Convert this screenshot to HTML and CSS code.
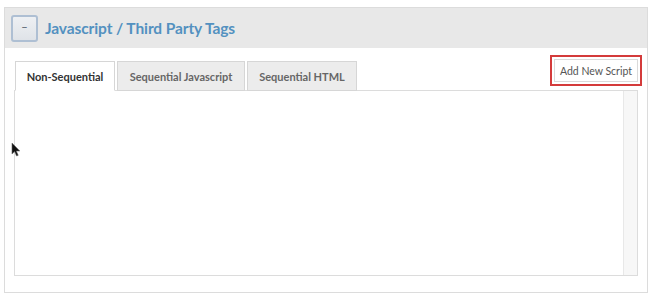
FILE: index.html
```html
<!DOCTYPE html>
<html lang="en">
  <head>
    <meta charset="utf-8">
    <title>Javascript / Third Party Tags</title>
    <link rel="stylesheet" href="styles.css">
  </head>
  <body>
    <div class="panel">
      <div class="panel-head">
        <button class="toggle" type="button">&ndash;</button>
        <h2 class="panel-title">Javascript / Third Party Tags</h2>
      </div>
      <div class="panel-body">
        <div class="tabbar">
          <ul class="tablist" role="tablist">
            <li class="tab" role="tab" aria-selected="true">Non-Sequential</li>
            <li class="tab tab-wide" role="tab" aria-selected="false">Sequential Javascript</li>
            <li class="tab tab-html" role="tab" aria-selected="false">Sequential HTML</li>
          </ul>
          <div class="highlight">
            <button class="add-btn" type="button">Add New Script</button>
          </div>
        </div>
        <div class="tabpanel" role="tabpanel">
          <div class="scrolltrack"></div>
        </div>
      </div>
    </div>
    <svg class="cursor" width="10" height="15" viewBox="0 0 10 15">
      <path d="M1 1 L1 12 L3.6 9.6 L5.6 14 L7.2 13.3 L5.3 9 L8.8 9 Z" fill="#111" stroke="#666" stroke-width="0.6"/>
    </svg>
  </body>
</html>
```
FILE: styles.css
```css
html, body {
  margin: 0;
  background: #fff;
  font-family: Lato, "Open Sans", sans-serif;
}
body {
  padding: 7px 10px 0 4px;
}
.panel {
  width: 642px;
  height: 284px;
  border: solid 1px #dcdcdc;
  display: flex;
  flex-direction: column;
}
.panel-head {
  height: 40px;
  background: #e8e8e8;
  display: flex;
  align-items: center;
  padding-left: 6px;
}
.toggle {
  width: 27px;
  height: 27px;
  margin: 0;
  padding: 0 0 3px 0;
  border: solid 2px #aebfd3;
  border-radius: 3px;
  background: linear-gradient(#eef0f3, #dfe3e8);
  color: #6a7480;
  font-size: 11px;
  font-weight: bold;
  font-family: Lato, sans-serif;
}
.panel-title {
  margin: 0 0 0 7px;
  font-size: 15.5px;
  font-weight: bold;
  color: #5391c0;
  letter-spacing: -0.1px;
}
.panel-body {
  flex: 1;
  padding: 7px 9px 16px 9px;
  display: flex;
  flex-direction: column;
}
.tabbar {
  display: flex;
  justify-content: space-between;
  align-items: flex-end;
  position: relative;
  z-index: 1;
}
.tablist {
  display: flex;
  gap: 2px;
  margin: 0 0 -1px 1px;
  padding: 0;
  list-style: none;
}
.tab {
  width: 98px;
  height: 28px;
  border: solid 1px #d6d6d6;
  background: #ececec;
  color: #666;
  font-size: 11px;
  font-weight: bold;
  display: flex;
  align-items: center;
  justify-content: center;
}
.tab[aria-selected=true] {
  background: #fff;
  color: #333;
  border-bottom-color: #fff;
}
.tab-wide {
  width: 126px;
}
.tab-html {
  width: 108px;
}
.highlight {
  margin: 0 -4px 4px 0;
  padding: 2px;
  border: solid 2px #d43b3b;
}
.add-btn {
  display: block;
  width: 84px;
  height: 23px;
  margin: 0;
  padding: 0;
  border: solid 1px #dadada;
  background: #fff;
  color: #555;
  font-family: Lato, sans-serif;
  font-size: 10.5px;
}
.tabpanel {
  flex: 1;
  border: solid 1px #dcdcdc;
  display: flex;
  justify-content: flex-end;
}
.scrolltrack {
  width: 13px;
  background: #f7f7f7;
  border-left: solid 1px #e8e8e8;
}
.cursor {
  position: absolute;
  left: 11px;
  top: 142px;
}
```
